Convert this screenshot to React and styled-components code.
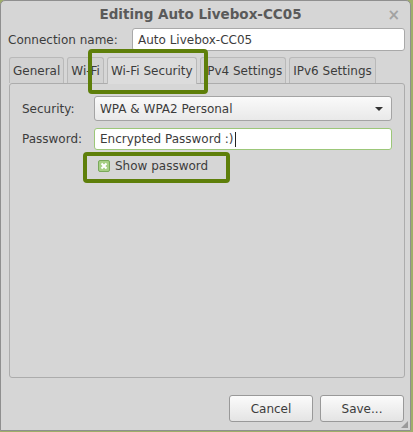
import React from "react";
import styled, { createGlobalStyle } from "styled-components";

const GlobalStyle = createGlobalStyle`
  html, body {
    margin: 0;
    padding: 0;
    background: #9fae6a;
  }
  body {
    font-family: "DejaVu Sans", "Noto Sans", sans-serif;
    font-size: 12px;
    color: #3c3c3c;
  }
`;

const Window = styled.div`
  position: relative;
  box-sizing: border-box;
  width: 411px;
  height: 431px;
  background: #d6d6d6;
  border: 1px solid #8f8f8f;
  border-radius: 5px 5px 0 0;
  display: flex;
  flex-direction: column;
`;

const TitleBar = styled.div`
  height: 27px;
  display: flex;
  align-items: center;
  justify-content: center;
  position: relative;
`;

const Title = styled.div`
  font-weight: bold;
  font-size: 13.5px;
  color: #5a5a5a;
  margin-left: -10px;
`;

const Close = styled.div`
  position: absolute;
  right: 10px;
  top: 5px;
  font-size: 15px;
  color: #a2a2a2;
  font-weight: bold;
`;

const Body = styled.div`
  flex: 1;
  display: flex;
  flex-direction: column;
  padding: 0 5px 8px 7px;
`;

const NameRow = styled.div`
  display: flex;
  align-items: center;
  height: 23px;
  margin-top: 2px;
`;

const Label = styled.div`
  width: ${(p) => p.$w}px;
  flex-shrink: 0;
  white-space: nowrap;
`;

const TextField = styled.div`
  box-sizing: border-box;
  flex: 1;
  height: ${(p) => p.$h || 23}px;
  background: #fff;
  border: 1px solid ${(p) => (p.$focus ? "#9cc779" : "#a9a9a9")};
  border-radius: 3px;
  display: flex;
  align-items: center;
  padding-left: 5px;
  white-space: nowrap;
`;

const Caret = styled.span`
  display: inline-block;
  width: 1px;
  height: 15px;
  background: #222;
  margin-left: 1px;
`;

const Tabs = styled.div`
  display: flex;
  align-items: flex-end;
  gap: 3px;
  margin-top: 5px;
  padding-left: 1px;
  height: 27px;
`;

const Tab = styled.div`
  box-sizing: border-box;
  height: ${(p) => (p.$active ? 27 : 26)}px;
  padding: 0 3px;
  display: flex;
  align-items: center;
  border: 1px solid #b9b9b9;
  border-bottom: none;
  border-radius: 3px 3px 0 0;
  background: ${(p) => (p.$active ? "#dcdcdc" : "#d2d2d2")};
  color: #3c3c3c;
  white-space: nowrap;
  margin-bottom: ${(p) => (p.$active ? -1 : 0)}px;
  position: relative;
  z-index: ${(p) => (p.$active ? 1 : 0)};
`;

const Panel = styled.div`
  box-sizing: border-box;
  height: 295px;
  margin-left: 1px;
  border: 1px solid #acacac;
  border-radius: 3px;
  background: #d6d6d6;
  padding: 12px 12px 0 12px;
  display: flex;
  flex-direction: column;
  gap: 7px;
`;

const FormRow = styled.div`
  display: flex;
  align-items: center;
`;

const Combo = styled.div`
  box-sizing: border-box;
  flex: 1;
  height: 25px;
  border: 1px solid #a4a4a4;
  border-radius: 3px;
  background: linear-gradient(#fafafa, #e9e9e9);
  display: flex;
  align-items: center;
  justify-content: space-between;
  padding: 0 8px 0 5px;
`;

const Arrow = styled.div`
  width: 0;
  height: 0;
  border-left: 4px solid transparent;
  border-right: 4px solid transparent;
  border-top: 4px solid #333;
`;

const CheckRow = styled.div`
  display: flex;
  align-items: center;
  gap: 5px;
  padding-left: 76px;
  margin-top: 2px;
`;

const CheckBox = styled.div`
  box-sizing: border-box;
  width: 12px;
  height: 12px;
  border: 1px solid #79a95a;
  border-radius: 2px;
  background: #a7cf85;
  display: flex;
  align-items: center;
  justify-content: center;
`;

const Footer = styled.div`
  display: flex;
  justify-content: flex-end;
  gap: 7px;
  margin-top: 17px;
  padding-right: 1px;
`;

const Button = styled.div`
  box-sizing: border-box;
  width: 84px;
  height: 27px;
  border: 1px solid #999;
  border-radius: 3px;
  background: linear-gradient(#fbfbfb, #e4e4e4);
  display: flex;
  align-items: center;
  justify-content: center;
  color: #3c3c3c;
`;

const Highlight = styled.div`
  position: absolute;
  box-sizing: border-box;
  border: 4px solid #5e7f0a;
  border-radius: 4px;
  left: ${(p) => p.$x}px;
  top: ${(p) => p.$y}px;
  width: ${(p) => p.$w}px;
  height: ${(p) => p.$h}px;
  pointer-events: none;
`;

const Grip = styled.svg`
  position: absolute;
  right: 2px;
  bottom: 2px;
`;

export default function App() {
  return (
    <>
      <GlobalStyle />
      <Window>
        <TitleBar>
          <Title>Editing Auto Livebox-CC05</Title>
          <Close>×</Close>
        </TitleBar>
        <Body>
          <NameRow>
            <Label $w={124}>Connection name:</Label>
            <TextField>Auto Livebox-CC05</TextField>
          </NameRow>
          <Tabs>
            <Tab>General</Tab>
            <Tab>Wi-Fi</Tab>
            <Tab $active>Wi-Fi Security</Tab>
            <Tab>IPv4 Settings</Tab>
            <Tab>IPv6 Settings</Tab>
          </Tabs>
          <Panel>
            <FormRow>
              <Label $w={72}>Security:</Label>
              <Combo>
                WPA &amp; WPA2 Personal
                <Arrow />
              </Combo>
            </FormRow>
            <FormRow>
              <Label $w={72}>Password:</Label>
              <TextField $focus $h={22}>
                Encrypted Password :)
                <Caret />
              </TextField>
            </FormRow>
            <CheckRow>
              <CheckBox>
                <svg width="8" height="8" viewBox="0 0 8 8">
                  <path d="M1.5 1.5 L6.5 6.5 M6.5 1.5 L1.5 6.5" stroke="#fff" strokeWidth="2" />
                </svg>
              </CheckBox>
              Show password
            </CheckRow>
          </Panel>
          <Footer>
            <Button>Cancel</Button>
            <Button>Save...</Button>
          </Footer>
        </Body>
        <Grip width="7" height="7" viewBox="0 0 7 7">
          <path d="M7 0 L7 7 L0 7 Z" fill="#9a9a9a" />
        </Grip>
        <Highlight $x={87} $y={48} $w={120} $h={45} />
        <Highlight $x={82} $y={151} $w={147} $h={31} />
      </Window>
    </>
  );
}
